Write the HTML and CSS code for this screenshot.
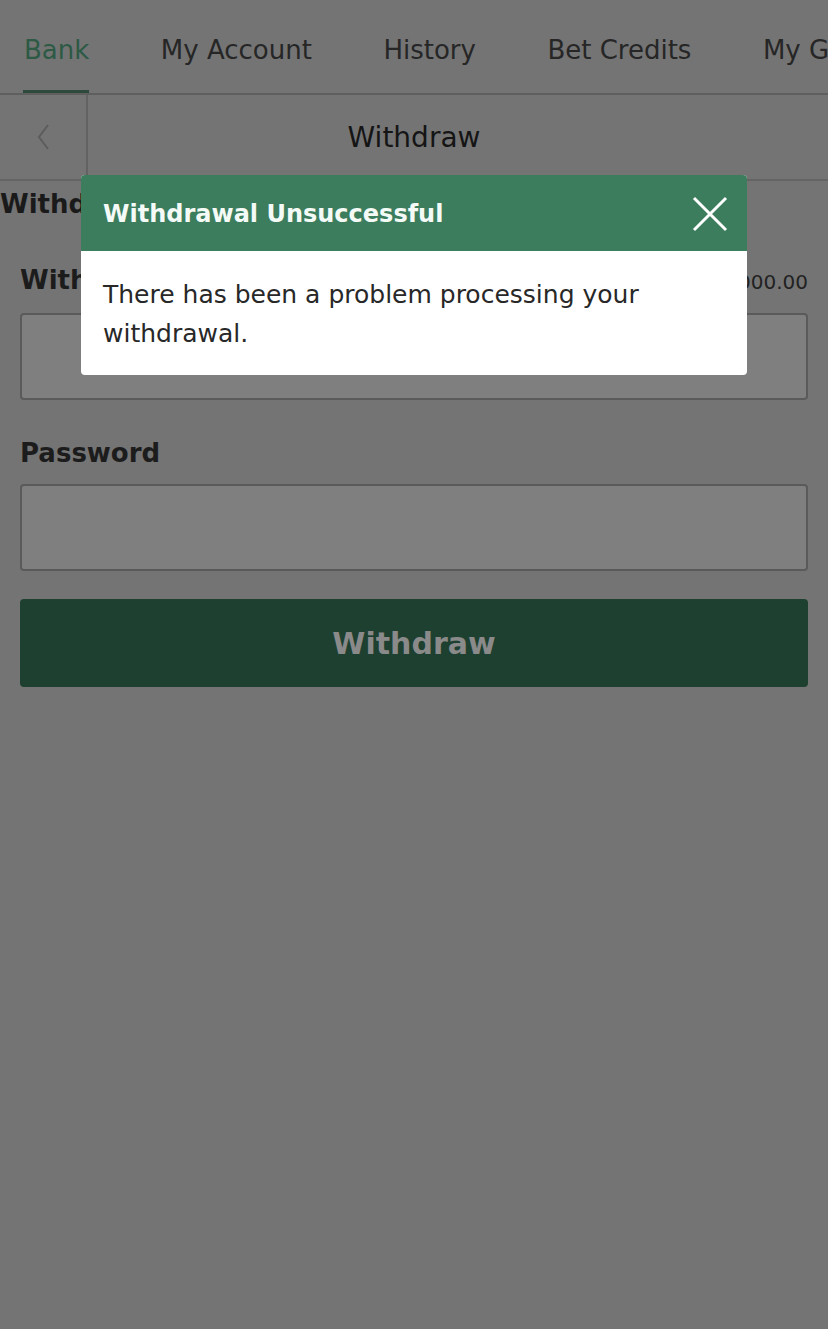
FILE: index.html
```html
<!DOCTYPE html>
<html>
<head>
    <meta charset="UTF-8">
    <title>Withdraw</title>
    <link rel="stylesheet" href="styles.css">
</head>
<body>

<div class="page">

    <ul class="tabs">
        <li class="cur">Bank</li>
        <li>My Account</li>
        <li>History</li>
        <li>Bet Credits</li>
        <li>My Gifts</li>
    </ul>

    <div class="subhead">
        <a class="back" href="#">
            <svg width="20" height="30" viewBox="0 0 20 30"><path d="M14 3 L5 15 L14 27" fill="none" stroke="#5c5c5c" stroke-width="2"/></svg>
        </a>
        <h1>Withdraw</h1>
    </div>

    <h2 class="section">Withdraw Funds</h2>

    <form class="form">
        <div class="label-row">
            <label>Withdrawal Amount</label>
            <span class="limit">Max: £1,000.00</span>
        </div>
        <input class="field" type="text">

        <div class="label-row">
            <label>Password</label>
        </div>
        <input class="field" type="password">

        <button class="submit" type="button">Withdraw</button>
    </form>

    <div class="modal">
        <div class="modal-head">
            <span>Withdrawal Unsuccessful</span>
            <svg class="close" width="36" height="36" viewBox="0 0 36 36"><path d="M2 2 L34 34 M34 2 L2 34" stroke="#fff" stroke-width="3"/></svg>
        </div>
        <p class="modal-body">There has been a problem processing your withdrawal.</p>
    </div>

</div>

</body>
</html>
```

FILE: styles.css
```css
* {
    margin: 0;
    padding: 0;
    box-sizing: border-box;
}

body {
    font-family: "DejaVu Sans", "Liberation Sans", sans-serif;
    background: #747474;
    color: #1b1b1b;
}

.page {
    position: relative;
    min-height: 1329px;
    overflow: hidden;
}

/* tabs */
.tabs {
    list-style: none;
    display: flex;
    gap: 71.5px;
    padding-left: 24px;
    height: 95px;
    border-bottom: 2px solid #5f5f5f;
    white-space: nowrap;
    font-size: 26px;
    color: #262626;
}

.tabs li {
    line-height: 100px;
    height: 93px;
    position: relative;
}

.tabs li.cur {
    color: #2c5a45;
}

.tabs li.cur:after {
    content: "";
    position: absolute;
    left: -1px;
    right: 0;
    bottom: 0;
    height: 3px;
    background: #2d4a3c;
}

/* sub header */
.subhead {
    display: flex;
    height: 86px;
    border-bottom: 2px solid #646464;
}

.back {
    width: 88px;
    border-right: 2px solid #626262;
    display: flex;
    align-items: center;
    justify-content: center;
    padding-left: 2px;
}

.subhead h1 {
    flex: 1;
    text-align: center;
    font-weight: normal;
    font-size: 28px;
    line-height: 86px;
    padding-right: 88px;
    color: #151515;
}

.section {
    font-size: 26px;
    line-height: 46px;
    color: #1a1a1a;
}

/* form */
.form {
    padding: 0 20px;
}

.label-row {
    display: flex;
    justify-content: space-between;
    align-items: baseline;
    line-height: 30px;
    margin-top: 38px;
    margin-bottom: 16px;
}

.label-row label {
    font-weight: bold;
    font-size: 26px;
    color: #1c1c1c;
}

.limit {
    font-size: 20px;
    color: #222;
}

.field {
    display: block;
    width: 100%;
    height: 87px;
    border: 2px solid #5a5a5a;
    border-radius: 4px;
    background: #7f7f7f;
}

.submit {
    display: block;
    width: 100%;
    height: 88px;
    margin-top: 28px;
    border: none;
    border-radius: 4px;
    background: #1e4030;
    color: #8a8a8a;
    font-family: "DejaVu Sans", "Liberation Sans", sans-serif;
    font-weight: bold;
    font-size: 30px;
}

/* modal */
.modal {
    position: absolute;
    left: 81px;
    top: 175px;
    width: 666px;
    background: #fff;
    border-radius: 4px;
    overflow: hidden;
}

.modal-head {
    display: flex;
    align-items: center;
    justify-content: space-between;
    height: 76px;
    padding: 1px 19px 0 22px;
    background: #3c7d5e;
    color: #f4faf6;
    font-weight: bold;
    font-size: 24px;
}

.modal-body {
    padding: 24px 80px 22px 22px;
    font-size: 25px;
    line-height: 39px;
    color: #282828;
}
```
